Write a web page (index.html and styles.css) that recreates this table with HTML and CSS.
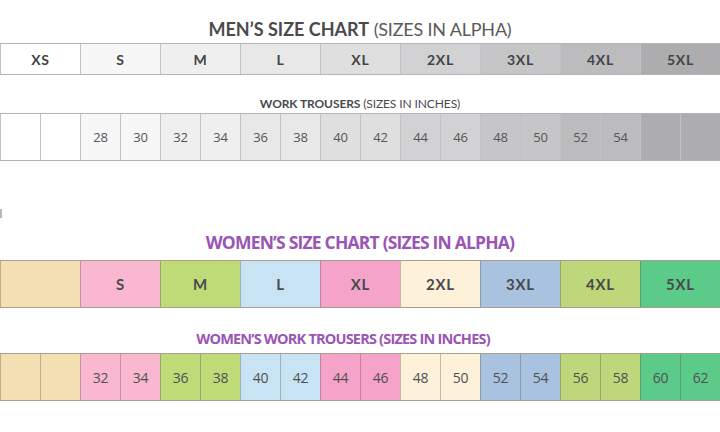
FILE: index.html
```html
<!DOCTYPE html>
<html>
<head>
<meta charset="utf-8">
<link rel="stylesheet" href="styles.css">
</head>
<body>
<section class="men">
  <h1 class="title men-title"><b>MEN’S SIZE CHART</b> <span>(SIZES IN ALPHA)</span></h1>
  <div class="row alpha">
    <div class="c m0">XS</div><div class="c m1">S</div><div class="c m2">M</div><div class="c m3">L</div><div class="c m4">XL</div><div class="c m5">2XL</div><div class="c m6">3XL</div><div class="c m7">4XL</div><div class="c m8">5XL</div>
  </div>
  <h2 class="sub men-sub"><b>WORK TROUSERS</b> <span>(SIZES IN INCHES)</span></h2>
  <div class="row inch">
    <div class="c m0"></div><div class="c m0"></div>
    <div class="c m1">28</div><div class="c m1">30</div>
    <div class="c m2">32</div><div class="c m2">34</div>
    <div class="c m3">36</div><div class="c m3">38</div>
    <div class="c m4">40</div><div class="c m4">42</div>
    <div class="c m5">44</div><div class="c m5">46</div>
    <div class="c m6">48</div><div class="c m6">50</div>
    <div class="c m7">52</div><div class="c m7">54</div>
    <div class="c m8"></div><div class="c m8"></div>
  </div>
</section>
<div class="mark"></div>
<section class="women">
  <h1 class="title women-title">WOMEN’S SIZE CHART (SIZES IN ALPHA)</h1>
  <div class="row alpha walpha">
    <div class="c w0"></div><div class="c w1">S</div><div class="c w2">M</div><div class="c w3">L</div><div class="c w4">XL</div><div class="c w5">2XL</div><div class="c w6">3XL</div><div class="c w7">4XL</div><div class="c w8">5XL</div>
  </div>
  <h2 class="sub women-sub">WOMEN’S WORK TROUSERS (SIZES IN INCHES)</h2>
  <div class="row inch winch">
    <div class="c w0"></div><div class="c w0"></div>
    <div class="c w1">32</div><div class="c w1">34</div>
    <div class="c w2">36</div><div class="c w2">38</div>
    <div class="c w3">40</div><div class="c w3">42</div>
    <div class="c w4">44</div><div class="c w4">46</div>
    <div class="c w5">48</div><div class="c w5">50</div>
    <div class="c w6">52</div><div class="c w6">54</div>
    <div class="c w7">56</div><div class="c w7">58</div>
    <div class="c w8">60</div><div class="c w8">62</div>
  </div>
</section>
</body>
</html>
```
FILE: styles.css
```css
* { box-sizing: border-box; margin: 0; padding: 0; }
html, body { background: #fff; }
body { width: 720px; height: 432px; overflow: hidden; font-family: Lato, "Open Sans", sans-serif; color: #4a4a4c; }

.title { font-size: 18px; line-height: 22px; text-align: center; font-weight: 400; }
.men-title { padding-top: 18px; height: 43px; color: #4a4a4c; }
.men-title b { font-weight: 700; }
.men-title span { font-weight: 400; color: #5a5a5c; letter-spacing: -0.2px; }

.row { display: grid; border-top: 1px solid #b4b4b6; border-bottom: 1px solid #b4b4b6; }
.alpha { grid-template-columns: repeat(9, 80px); height: 32px; }
.inch { grid-template-columns: repeat(18, 40px); height: 48px; }
.c { display: flex; align-items: center; justify-content: center; border-left: 1px solid #c2c2c4; }
.alpha .c { font-weight: 700; font-size: 14px; letter-spacing: 0.8px; color: #444446; }
.inch .c { font-family: "Open Sans", sans-serif; font-size: 13px; color: #555557; letter-spacing: -0.3px; }

.sub { text-align: center; font-size: 12px; line-height: 14px; }
.men-sub { padding-top: 22px; height: 38px; color: #4a4a4c; letter-spacing: -0.1px; }
.men-sub b { font-weight: 700; }
.men-sub span { font-weight: 400; }

.m0 { background: #ffffff; }
.m1 { background: #f7f7f7; }
.m2 { background: #efefef; }
.m3 { background: #e8e8e9; }
.m4 { background: #dfdfe0; }
.m5 { background: #d2d2d4; }
.m6 { background: #c6c6c8; }
.m7 { background: #bcbcbe; }
.m8 { background: #adadaf; }

.mark { width: 2px; height: 9px; background: #b8b8b8; margin-top: 48px; }

.women { padding-top: 13px; }
.women-title { font-family: "Open Sans", sans-serif; font-weight: 700; color: #9a55b5; font-size: 17.5px; letter-spacing: -0.8px; height: 29px; line-height: 22px; }
.women-sub { font-family: "Open Sans", sans-serif; font-weight: 700; color: #9a55b5; font-size: 14.5px; letter-spacing: -0.8px; line-height: 18px; padding-top: 22px; padding-right: 34px; height: 45px; }

.walpha { height: 48px; }
.walpha, .winch { border-color: #a89f8f; }
.walpha .c, .winch .c { border-left-color: rgba(90, 80, 70, 0.35); }
.walpha .c { font-size: 15px; color: #4a4a4c; }
.winch .c { font-size: 14px; color: #505052; }

.w0 { background: #f3dfb1; }
.w1 { background: #f9b8cf; }
.w2 { background: #bedb78; }
.w3 { background: #c7e3f4; }
.w4 { background: #f5a3c8; }
.w5 { background: #fdf1da; }
.w6 { background: #a8c2e0; }
.w7 { background: #bdd77a; }
.w8 { background: #5ccb8a; }
```
